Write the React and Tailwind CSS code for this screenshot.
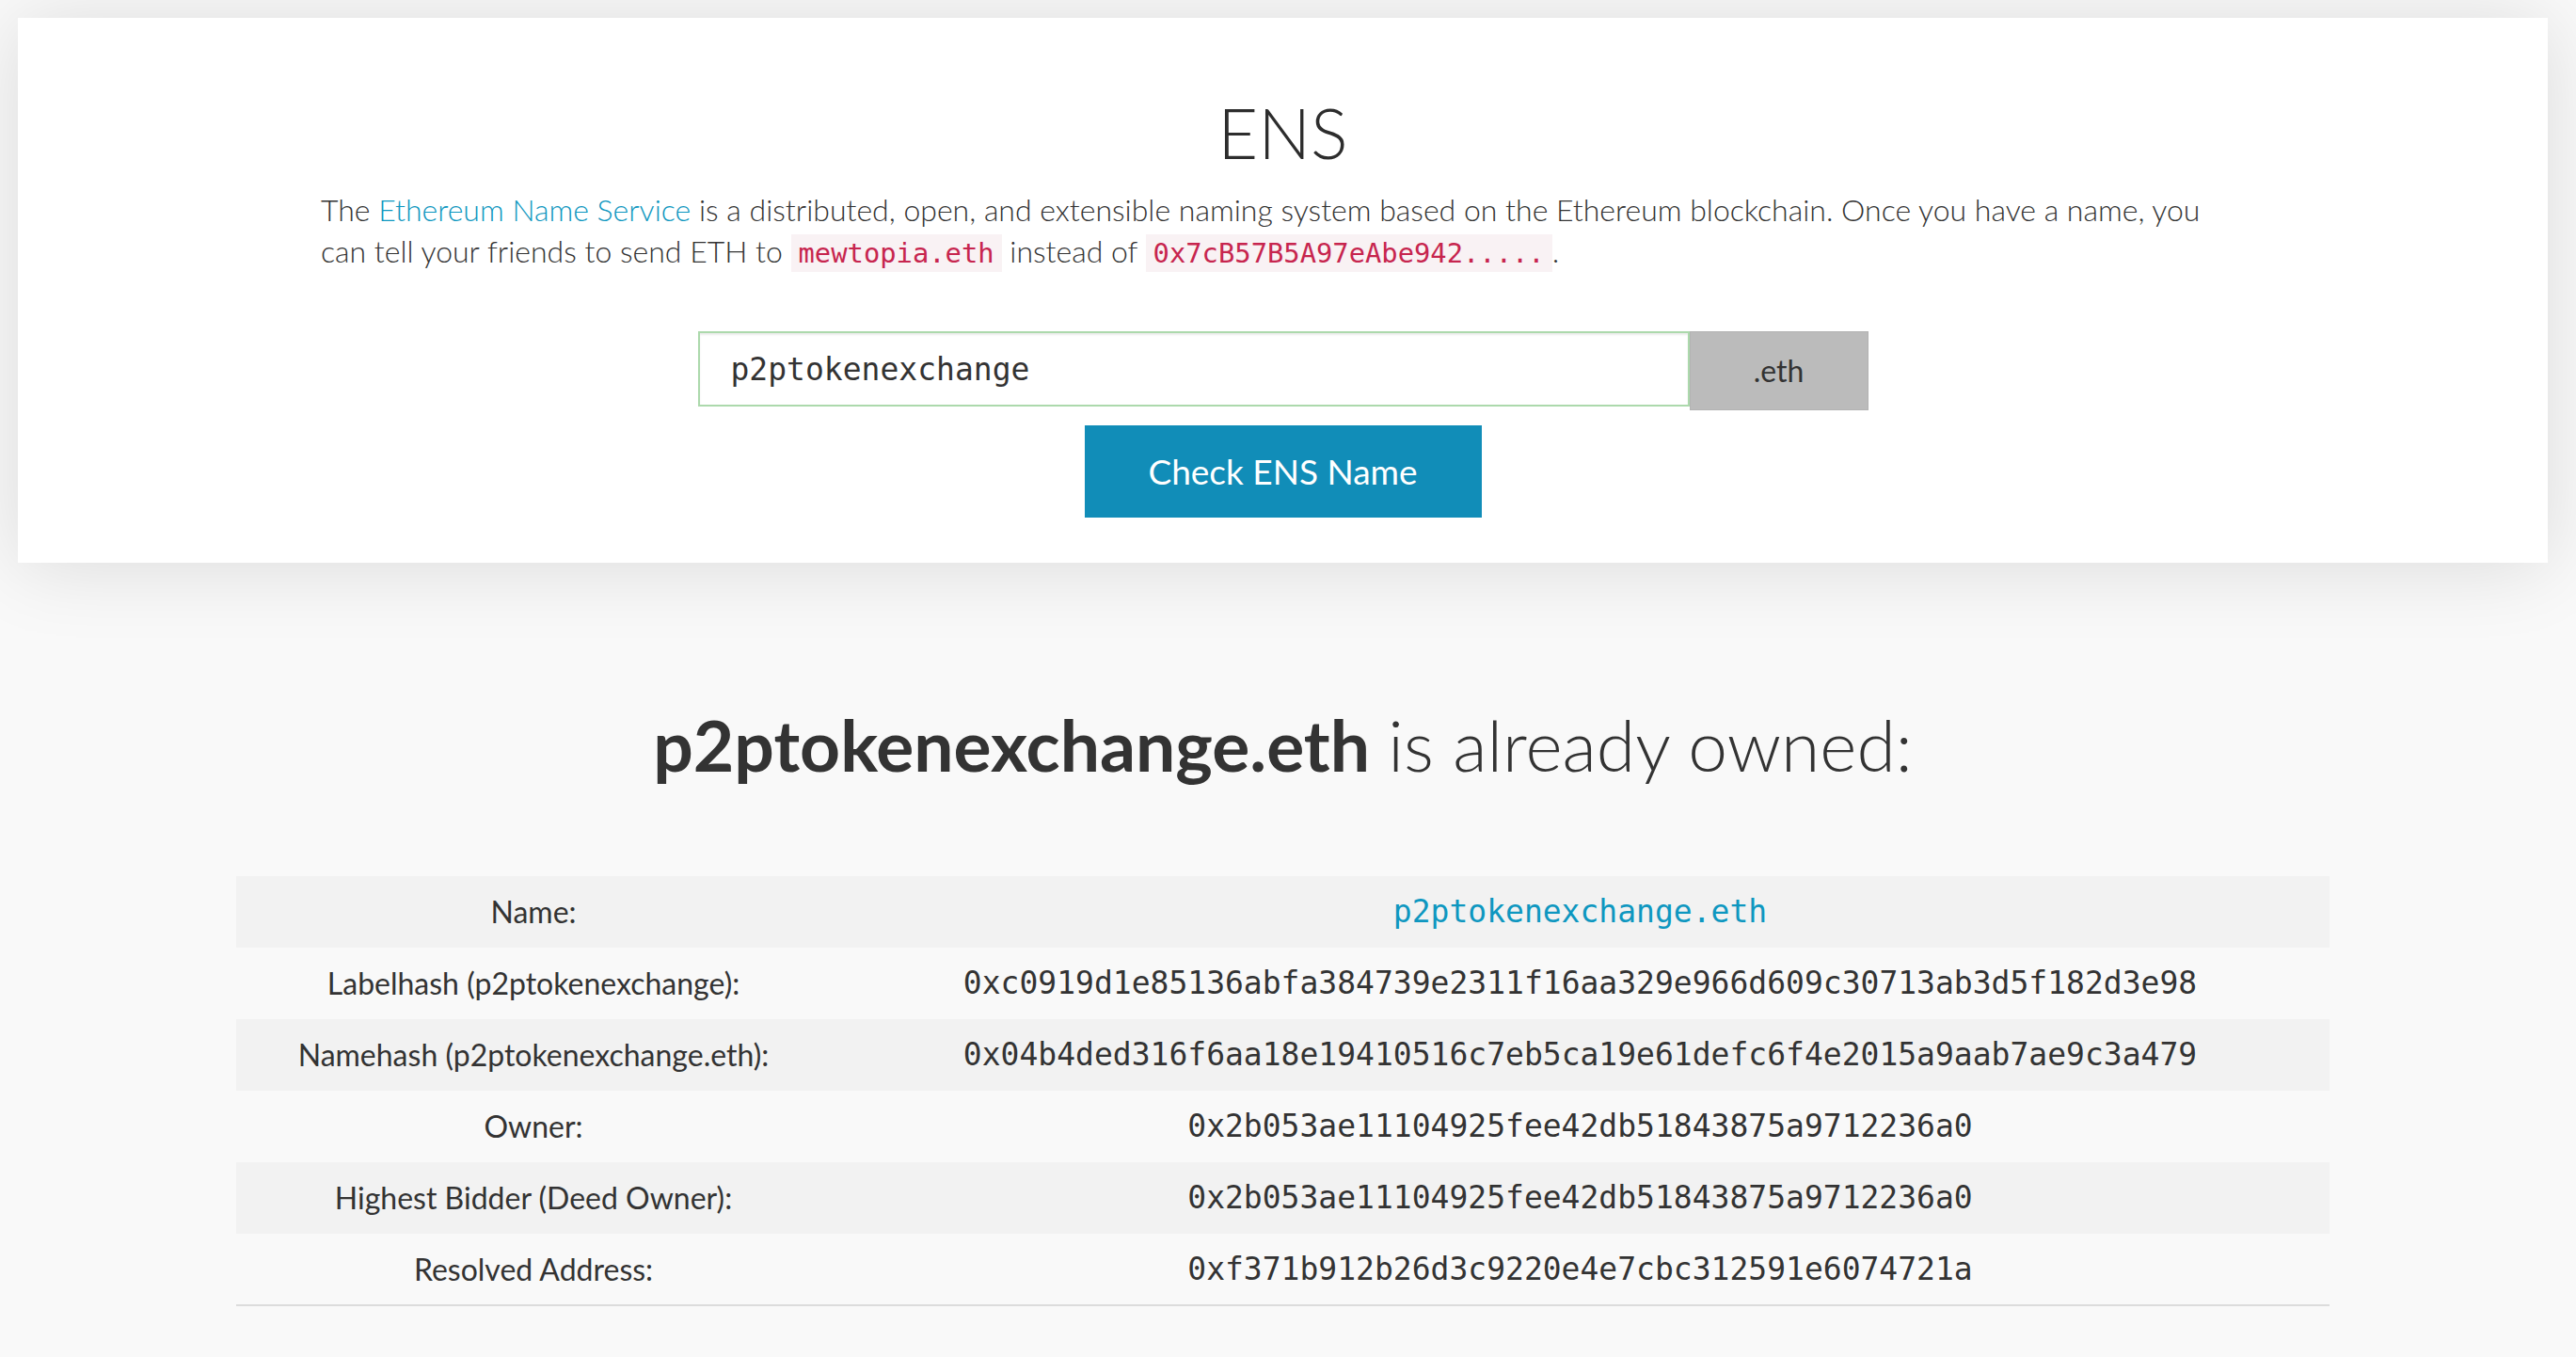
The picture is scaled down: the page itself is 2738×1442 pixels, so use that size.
import React from "react";

const rows = [
  { label: "Name:", value: "p2ptokenexchange.eth", link: true },
  { label: "Labelhash (p2ptokenexchange):", value: "0xc0919d1e85136abfa384739e2311f16aa329e966d609c30713ab3d5f182d3e98" },
  { label: "Namehash (p2ptokenexchange.eth):", value: "0x04b4ded316f6aa18e19410516c7eb5ca19e61defc6f4e2015a9aab7ae9c3a479" },
  { label: "Owner:", value: "0x2b053ae11104925fee42db51843875a9712236a0" },
  { label: "Highest Bidder (Deed Owner):", value: "0x2b053ae11104925fee42db51843875a9712236a0" },
  { label: "Resolved Address:", value: "0xf371b912b26d3c9220e4e7cbc312591e6074721a" },
];

// inline code pill, bootstrap-ish
function Code({ children }) {
  return (
    <code className="font-['DejaVu_Sans_Mono',monospace] text-[0.9em] text-[#c7254e] bg-[#f9f2f4] px-[8px] py-[3px]">
      {children}
    </code>
  );
}

export default function App() {
  const [name, setName] = React.useState("p2ptokenexchange");

  return (
    <div className="min-h-screen bg-[#f9f9f9] text-[#333] font-['Lato','Open_Sans',sans-serif]">
      <div className="pl-[19px] pr-[30px] pt-[19px] pb-[54px]">
        {/* Search card */}
        <section className="bg-white shadow-[0_4px_80px_rgba(0,0,0,0.12)] pt-[82px] pb-[48px]">
          <h1 className="text-center text-[74px] leading-[80px] font-light text-[#2d2d2d]">ENS</h1>
          <p className="mt-[20px] mx-auto w-[2045px] text-[32px] leading-[44px] font-light">
            The <a href="#" className="text-[#0e97c0]">Ethereum Name Service</a> is a distributed, open, and
            extensible naming system based on the Ethereum blockchain. Once you have a name, you can tell your
            friends to send ETH to <Code>mewtopia.eth</Code> instead of <Code>0x7cB57B5A97eAbe942.....</Code>.
          </p>

          <div className="mt-[61px] flex justify-center items-start">
            <input
              value={name}
              onChange={(e) => setName(e.target.value)}
              className="w-[1054px] h-[80px] border-2 border-[#acd9ac] shadow-[inset_0_2px_2px_rgba(0,0,0,0.075)] pl-[33px] outline-none font-['DejaVu_Sans_Mono',monospace] text-[33px] text-[#333]"
            />
            <div className="w-[190px] h-[84px] bg-[#bbbbbb] border border-[#b3b3b3] flex items-center justify-center text-[32px] text-[#333]">
              .eth
            </div>
          </div>

          <div className="mt-[16px] flex justify-center">
            <button className="w-[422px] h-[98px] bg-[#118db8] text-white text-[37px]">Check ENS Name</button>
          </div>
        </section>

        {/* Result */}
        <h2 className="mt-[150px] text-center text-[75px] leading-[86px] text-[#333]">
          <strong className="font-bold">{name}.eth</strong> <span className="font-light">is already owned:</span>
        </h2>

        <table className="mt-[97px] mx-auto w-[2225px] border-b-2 border-[#dcdcdc]">
          <tbody>
            {rows.map((r, i) => (
              <tr key={i} className={i % 2 === 0 ? "bg-[#f2f2f2]" : "bg-[#f9f9f9]"}>
                <td className="w-[632px] h-[76px] text-center text-[32px] leading-[44px]">{r.label}</td>
                <td className="h-[76px] text-center font-['DejaVu_Sans_Mono',monospace] text-[33px] leading-[44px]">
                  {r.link ? <a href="#" className="text-[#0e97c0]">{r.value}</a> : r.value}
                </td>
              </tr>
            ))}
          </tbody>
        </table>
      </div>
    </div>
  );
}
